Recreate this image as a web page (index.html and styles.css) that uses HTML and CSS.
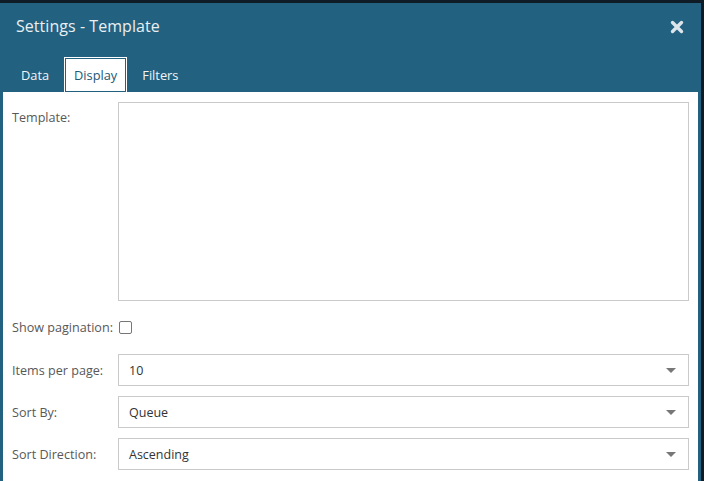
FILE: index.html
```html
<!DOCTYPE html>
<html>
<head>
<meta charset="utf-8">
<link rel="stylesheet" href="styles.css">
</head>
<body>
<div class="dialog">
  <div class="header">
    <div class="title-row">
      <span class="title">Settings - Template</span>
      <svg class="close" width="14" height="14" viewBox="0 0 14 14"><path d="M2.5 2.5 L11.5 11.5 M11.5 2.5 L2.5 11.5" stroke="#dbe5eb" stroke-width="3.4" stroke-linecap="round"/></svg>
    </div>
    <div class="tabs">
      <div class="tab">Data</div>
      <div class="tab active">Display</div>
      <div class="tab">Filters</div>
    </div>
  </div>
  <div class="body">
    <div class="row row-template">
      <label class="lbl lbl-top">Template:</label>
      <div class="textarea"></div>
    </div>
    <div class="row row-check">
      <label class="lbl">Show pagination:</label>
      <span class="checkbox"></span>
    </div>
    <div class="row row-select">
      <label class="lbl">Items per page:</label>
      <div class="select"><span>10</span><span class="caret"></span></div>
    </div>
    <div class="row row-select">
      <label class="lbl">Sort By:</label>
      <div class="select"><span>Queue</span><span class="caret"></span></div>
    </div>
    <div class="row row-select">
      <label class="lbl">Sort Direction:</label>
      <div class="select"><span>Ascending</span><span class="caret"></span></div>
    </div>
  </div>
</div>
</body>
</html>
```

FILE: styles.css
```css
html, body {
  margin: 0;
  padding: 0;
  height: 100%;
  overflow: hidden;
}
body {
  background: #101c25;
  font-family: "Open Sans", "Noto Sans", sans-serif;
  padding-top: 3px;
  box-sizing: border-box;
  display: flex;
}
.dialog {
  width: 701px;
  background: #22617f;
  padding: 0 3px;
  box-sizing: border-box;
  display: flex;
  flex-direction: column;
  height: 520px;
}
.header {
  height: 89px;
  display: flex;
  flex-direction: column;
}
.title-row {
  display: flex;
  align-items: center;
  justify-content: space-between;
  height: 45px;
  padding: 0 14px 0 13px;
}
.title {
  color: #e9eff3;
  font-size: 16px;
  letter-spacing: 0.05px;
  margin-top: 1px;
}
.close {
  margin-top: 2px;
}
.tabs {
  display: flex;
  gap: 7px;
  padding-left: 9px;
  margin-top: 9px;
  height: 35px;
}
.tab {
  padding: 0 8px;
  border: 1px solid transparent;
  color: #f1f5f8;
  font-size: 12.8px;
  display: flex;
  align-items: center;
}
.tab.active {
  background: #fff;
  color: #1e5876;
  border-color: #22617f;
  box-shadow: 0 0 0 1px #fff;
  margin-top: 1px;
}
.body {
  background: #fff;
  flex: 1;
  padding: 10px 9px 0 9px;
}
.row {
  display: flex;
  align-items: center;
}
.lbl {
  width: 106px;
  flex: none;
  color: #585858;
  font-size: 12.6px;
}
.row-template {
  align-items: flex-start;
  margin-bottom: 16px;
}
.lbl-top {
  padding-top: 7px;
}
.textarea {
  flex: 1;
  height: 197px;
  border: 1px solid #cacaca;
}
.row-check {
  height: 20px;
  margin-bottom: 17px;
}
.row-check .lbl {
  width: auto;
  margin-right: 6px;
}
.checkbox {
  width: 11px;
  height: 11px;
  border: 1px solid #767676;
  border-radius: 2px;
  display: inline-block;
}
.row-select {
  margin-bottom: 10px;
}
.select {
  flex: 1;
  height: 30px;
  border: 1px solid #cacaca;
  display: flex;
  align-items: center;
  justify-content: space-between;
  padding: 0 12px 0 10px;
  font-size: 12.5px;
  color: #333;
}
.caret {
  width: 0;
  height: 0;
  border-left: 5px solid transparent;
  border-right: 5px solid transparent;
  border-top: 5px solid #777;
}
```
